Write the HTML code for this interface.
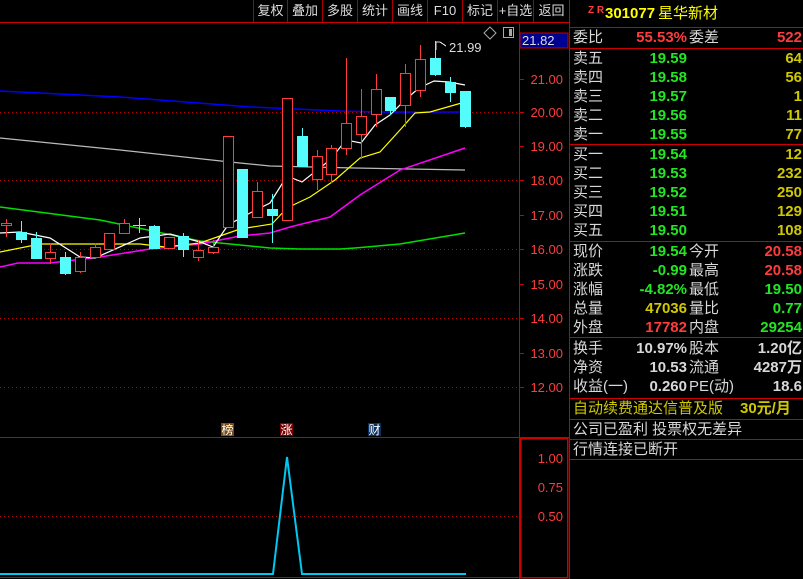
<!DOCTYPE html>
<html><head><meta charset="utf-8"><style>
*{margin:0;padding:0;box-sizing:border-box}
body{width:803px;height:579px;background:#000;overflow:hidden;position:relative;font-family:"Liberation Sans","Noto Sans CJK SC",sans-serif}
.tb{position:absolute;top:0;height:22px;color:#ddd;font-size:13px;line-height:22px;text-align:center;border-left:1px solid #a00}
.rp{position:absolute;left:569px;top:0;width:234px;height:579px;border-left:1px solid #c00}
.row{position:absolute;left:0;width:234px;height:19px;font-size:15px;line-height:19px;color:#d8d8d8}
.row span{position:absolute;top:0;white-space:nowrap}
.l1{left:3px}.v1{right:117px;font-weight:bold}.l2{left:119px}.v2{right:2px;font-weight:bold}
.hl{position:absolute;left:0;width:234px;height:1px;background:#c00}
.g{color:#22e622}.r{color:#ff3c3c}.y{color:#d0c800}.w{color:#d8d8d8}
</style></head><body>
<div class="tb" style="left:253px;width:34px">复权</div>
<div class="tb" style="left:287px;width:35px">叠加</div>
<div class="tb" style="left:322px;width:35px">多股</div>
<div class="tb" style="left:357px;width:35px">统计</div>
<div class="tb" style="left:392px;width:35px">画线</div>
<div class="tb" style="left:427px;width:35px">F10</div>
<div class="tb" style="left:462px;width:35px">标记</div>
<div class="tb" style="left:497px;width:36px">+自选</div>
<div class="tb" style="left:533px;width:36px">返回</div>
<svg width="569" height="579" style="position:absolute;left:0;top:0" shape-rendering="crispEdges">
<line x1="0" y1="22.5" x2="569" y2="22.5" stroke="#c00"/>
<line x1="519.5" y1="22" x2="519.5" y2="579" stroke="#c00"/>
<rect x="520" y="33" width="48" height="15" fill="#000090" stroke="#c00"/>
<text x="522" y="45" fill="#ddd" font-size="13" font-family="Liberation Sans">21.82</text>
<g stroke="#b00" stroke-dasharray="1,3">
<line x1="0" y1="112.5" x2="519" y2="112.5"/><line x1="0" y1="180.5" x2="519" y2="180.5"/><line x1="0" y1="249.5" x2="519" y2="249.5"/><line x1="0" y1="318.5" x2="519" y2="318.5"/><line x1="0" y1="387.5" x2="519" y2="387.5"/><line x1="0" y1="516.5" x2="519" y2="516.5"/>
</g>
<g fill="#ff3c3c" font-size="13" font-family="Liberation Sans" text-anchor="end">
<text x="563" y="84">21.00</text><text x="563" y="117">20.00</text><text x="563" y="151">19.00</text><text x="563" y="185">18.00</text><text x="563" y="220">17.00</text><text x="563" y="254">16.00</text><text x="563" y="289">15.00</text><text x="563" y="323">14.00</text><text x="563" y="358">13.00</text><text x="563" y="392">12.00</text>
<text x="563" y="463">1.00</text><text x="563" y="492">0.75</text><text x="563" y="521">0.50</text>
</g>
<g stroke="#c00"><line x1="520" y1="79.5" x2="524" y2="79.5"/><line x1="520" y1="112.5" x2="524" y2="112.5"/><line x1="520" y1="146.5" x2="524" y2="146.5"/><line x1="520" y1="180.5" x2="524" y2="180.5"/><line x1="520" y1="215.5" x2="524" y2="215.5"/><line x1="520" y1="249.5" x2="524" y2="249.5"/><line x1="520" y1="284.5" x2="524" y2="284.5"/><line x1="520" y1="318.5" x2="524" y2="318.5"/><line x1="520" y1="353.5" x2="524" y2="353.5"/><line x1="520" y1="387.5" x2="524" y2="387.5"/></g>
<line x1="0" y1="437.5" x2="569" y2="437.5" stroke="#c00"/>
<rect x="520.5" y="438.5" width="47" height="139" fill="none" stroke="#c00" stroke-width="1.5"/>
<line x1="0" y1="577.5" x2="520" y2="577.5" stroke="#c00"/>
<g fill="none" stroke-width="1.2" shape-rendering="auto">
<polyline stroke="#0000ff" stroke-width="1.5" points="0,91 120,97 251,107 340,111 384,112 465,112"/>
<polyline stroke="#bbb" points="0,138 120,150 230,162 270,166 355,168 465,170"/>
<polyline stroke="#00e000" stroke-width="1.5" points="0,207 100,220 200,241 270,248 300,249 340,249 355,248 400,244 465,233"/>
<polyline stroke="#ff00ff" stroke-width="1.5" points="0,267 18,263 50,263 100,257 150,249 200,244 240,236 270,233 290,227 330,217 360,195 400,170 465,148"/>
<polyline stroke="#ffff00" points="0,252 40,244 140,244 165,247 200,243 240,229 272,224 287,208 310,197 335,180 360,158 380,152 400,130 415,113 430,112 465,102"/>
<polyline stroke="#fff" points="0,233 20,232 50,238 80,257 95,258 140,238 170,234 200,242 213,247 228,225 250,213 270,203 287,176 302,182 330,160 346,140 361,143 375,125 390,115 405,100 419,88 434,81 449,82 465,85"/>
</g>
<g>
<g stroke="#ff3c3c" fill="#000">
<line x1="6.5" y1="219" x2="6.5" y2="237"/><rect x="1.5" y="223.5" width="10" height="2"/>
<line x1="50.5" y1="243" x2="50.5" y2="264"/><rect x="45.5" y="252.5" width="10" height="6"/>
<line x1="80.5" y1="252" x2="80.5" y2="273"/><rect x="75.5" y="257.5" width="10" height="14"/>
<line x1="95.5" y1="243" x2="95.5" y2="258"/><rect x="90.5" y="247.5" width="10" height="10"/>
<rect x="104.5" y="233.5" width="10" height="16"/>
<line x1="124.5" y1="219" x2="124.5" y2="233"/><rect x="119.5" y="223.5" width="10" height="10"/>
<rect x="164.5" y="237.5" width="10" height="11"/>
<line x1="198.5" y1="240" x2="198.5" y2="261"/><rect x="193.5" y="250.5" width="10" height="7"/>
<line x1="213.5" y1="240" x2="213.5" y2="254"/><rect x="208.5" y="247.5" width="10" height="5"/>
<rect x="223.5" y="136.5" width="10" height="91"/>
<line x1="257.5" y1="182" x2="257.5" y2="191"/><rect x="252.5" y="191.5" width="10" height="26"/>
<rect x="282.5" y="98.5" width="10" height="122"/>
<line x1="317.5" y1="150" x2="317.5" y2="190"/><rect x="312.5" y="156.5" width="10" height="23"/>
<line x1="331.5" y1="145" x2="331.5" y2="183"/><rect x="326.5" y="148.5" width="10" height="26"/>
<line x1="346.5" y1="58" x2="346.5" y2="155"/><rect x="341.5" y="123.5" width="10" height="25"/>
<line x1="361.5" y1="89" x2="361.5" y2="159"/><rect x="356.5" y="116.5" width="10" height="18"/>
<line x1="376.5" y1="74" x2="376.5" y2="127"/><rect x="371.5" y="89.5" width="10" height="25"/>
<line x1="405.5" y1="64" x2="405.5" y2="127"/><rect x="400.5" y="73.5" width="10" height="32"/>
<line x1="420.5" y1="45" x2="420.5" y2="97"/><rect x="415.5" y="59.5" width="10" height="31"/>
</g>
<g stroke="#54fcfc" fill="#54fcfc">
<line x1="21.5" y1="221" x2="21.5" y2="243"/><rect x="16.5" y="232.5" width="10" height="7"/>
<line x1="36.5" y1="232" x2="36.5" y2="259"/><rect x="31.5" y="238.5" width="10" height="20"/>
<line x1="65.5" y1="252" x2="65.5" y2="275"/><rect x="60.5" y="257.5" width="10" height="16"/>
<line x1="139.5" y1="218" x2="139.5" y2="233"/><line x1="133" y1="225.5" x2="146" y2="225.5"/>
<line x1="154.5" y1="225" x2="154.5" y2="249"/><rect x="149.5" y="226.5" width="10" height="22"/>
<line x1="183.5" y1="233" x2="183.5" y2="257"/><rect x="178.5" y="236.5" width="10" height="13"/>
<rect x="237.5" y="169.5" width="10" height="68"/>
<line x1="272.5" y1="194" x2="272.5" y2="243"/><rect x="267.5" y="209.5" width="10" height="6"/>
<line x1="302.5" y1="128" x2="302.5" y2="136"/><rect x="297.5" y="136.5" width="10" height="30"/>
<line x1="390.5" y1="97" x2="390.5" y2="115"/><rect x="385.5" y="97.5" width="10" height="13"/>
<line x1="435.5" y1="41" x2="435.5" y2="76"/><rect x="430.5" y="58.5" width="10" height="16"/>
<line x1="450.5" y1="77" x2="450.5" y2="102"/><rect x="445.5" y="82.5" width="10" height="10"/>
<line x1="465.5" y1="91" x2="465.5" y2="128"/><rect x="460.5" y="91.5" width="10" height="35"/>
</g>
</g>
<polyline points="436,50 436,42 440,42 446,46" fill="none" stroke="#ddd"/>
<text x="449" y="52" fill="#ddd" font-size="13" font-family="Liberation Sans">21.99</text>
<path d="M490 27 L496 33 L490 39 L484 33Z" fill="none" stroke="#aaa" shape-rendering="auto"/>
<rect x="503.5" y="27.5" width="10" height="10" fill="none" stroke="#aaa"/><rect x="509" y="29" width="3" height="7" fill="#aaa"/>
<rect x="221" y="423" width="13" height="13" fill="#7a4a10"/><text x="221.5" y="434" fill="#fff" font-size="12">榜</text>
<rect x="280" y="423" width="13" height="13" fill="#7a0000"/><text x="280.5" y="434" fill="#fff" font-size="12">涨</text>
<rect x="368" y="423" width="13" height="13" fill="#0a3060"/><text x="368.5" y="434" fill="#fff" font-size="12">财</text>
<polyline points="0,574 273,574 287,457 302,574 466,574" fill="none" stroke="#00c8f0" stroke-width="2" shape-rendering="auto"/>
</svg>
<div class="rp">
<div class="row" style="top:4px;height:20px;font-size:15px;line-height:20px"><span style="left:18px;top:-3px;font-size:10px;color:#ff3c3c;font-weight:bold">Z R</span><span style="left:35px;color:#ffff00;font-weight:bold">301077</span><span style="left:88px;color:#ffff00">星华新材</span></div>
<div class="hl" style="top:27px"></div>
<div class="row" style="top:28px"><span class="l1">委比</span><span class="v1 r">55.53%</span><span class="l2">委差</span><span class="v2 r">522</span></div>
<div class="hl" style="top:48px"></div>
<div class="row" style="top:49px"><span class="l1">卖五</span><span class="v1 g">19.59</span><span class="v2 y">64</span></div>
<div class="row" style="top:68px"><span class="l1">卖四</span><span class="v1 g">19.58</span><span class="v2 y">56</span></div>
<div class="row" style="top:87px"><span class="l1">卖三</span><span class="v1 g">19.57</span><span class="v2 y">1</span></div>
<div class="row" style="top:106px"><span class="l1">卖二</span><span class="v1 g">19.56</span><span class="v2 y">11</span></div>
<div class="row" style="top:125px"><span class="l1">卖一</span><span class="v1 g">19.55</span><span class="v2 y">77</span></div>
<div class="hl" style="top:144px"></div>
<div class="row" style="top:145px"><span class="l1">买一</span><span class="v1 g">19.54</span><span class="v2 y">12</span></div>
<div class="row" style="top:164px"><span class="l1">买二</span><span class="v1 g">19.53</span><span class="v2 y">232</span></div>
<div class="row" style="top:183px"><span class="l1">买三</span><span class="v1 g">19.52</span><span class="v2 y">250</span></div>
<div class="row" style="top:202px"><span class="l1">买四</span><span class="v1 g">19.51</span><span class="v2 y">129</span></div>
<div class="row" style="top:221px"><span class="l1">买五</span><span class="v1 g">19.50</span><span class="v2 y">108</span></div>
<div class="hl" style="top:241px"></div>
<div class="row" style="top:242px"><span class="l1">现价</span><span class="v1 g">19.54</span><span class="l2">今开</span><span class="v2 r">20.58</span></div>
<div class="row" style="top:261px"><span class="l1">涨跌</span><span class="v1 g">-0.99</span><span class="l2">最高</span><span class="v2 r">20.58</span></div>
<div class="row" style="top:280px"><span class="l1">涨幅</span><span class="v1 g">-4.82%</span><span class="l2">最低</span><span class="v2 g">19.50</span></div>
<div class="row" style="top:299px"><span class="l1">总量</span><span class="v1 y">47036</span><span class="l2">量比</span><span class="v2 g">0.77</span></div>
<div class="row" style="top:318px"><span class="l1">外盘</span><span class="v1 r">17782</span><span class="l2">内盘</span><span class="v2 g">29254</span></div>
<div class="hl" style="top:337px"></div>
<div class="row" style="top:339px"><span class="l1">换手</span><span class="v1 w">10.97%</span><span class="l2">股本</span><span class="v2 w">1.20亿</span></div>
<div class="row" style="top:358px"><span class="l1">净资</span><span class="v1 w">10.53</span><span class="l2">流通</span><span class="v2 w">4287万</span></div>
<div class="row" style="top:377px"><span class="l1">收益(一)</span><span class="v1 w">0.260</span><span class="l2">PE(动)</span><span class="v2 w">18.6</span></div>
<div class="hl" style="top:398px"></div>
<div class="row" style="top:399px"><span class="l1 y">自动续费通达信普及版</span><span class="y" style="left:170px;font-weight:bold">30元/月</span></div>
<div class="hl" style="top:419px"></div>
<div class="row" style="top:420px"><span class="l1">公司已盈利 投票权无差异</span></div>
<div class="hl" style="top:439px"></div>
<div class="row" style="top:440px"><span class="l1">行情连接已断开</span></div>
<div class="hl" style="top:459px"></div>
</div>
</body></html>
